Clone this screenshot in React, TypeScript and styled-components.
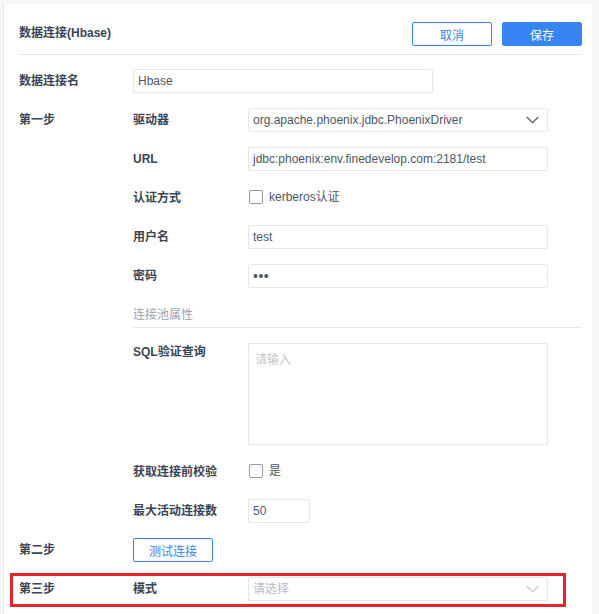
import React from "react";
import styled, { createGlobalStyle, css } from "styled-components";

const GlobalStyle = createGlobalStyle`
  html, body { margin: 0; padding: 0; }
  body {
    background: #f6f7f9;
    font-family: "Liberation Sans", "Noto Sans CJK SC", sans-serif;
    font-size: 12px;
    color: #3d4757;
    overflow: hidden;
  }
  * { box-sizing: border-box; }
`;

const Page = styled.div`
  padding: 4px 7px 0 3px;
  height: 614px;
`;

const Panel = styled.div`
  background: #ffffff;
  border-left: 1px solid #e4e6ea;
  height: 610px;
  padding: 0 10px 0 15px;
`;

const Header = styled.div`
  display: flex;
  align-items: center;
  justify-content: space-between;
  padding: 18px 0 8px;
  border-bottom: 1px solid #e6e8ec;
`;

const Title = styled.div`
  font-weight: bold;
  font-size: 12px;
  color: #3a4456;
  line-height: 20px;
  margin-top: -3px;
`;

const Actions = styled.div`
  display: flex;
  gap: 10px;
`;

const Button = styled.button<{ $primary?: boolean }>`
  width: 80px;
  height: 24px;
  border-radius: 2px;
  font-family: inherit;
  font-size: 12px;
  cursor: pointer;
  border: 1px solid #3685f2;
  padding: 0;
  ${(p) =>
    p.$primary
      ? css`
          background: #3685f2;
          color: #ffffff;
        `
      : css`
          background: #ffffff;
          color: #3685f2;
        `}
`;

const Form = styled.div`
  display: flex;
  flex-direction: column;
  gap: 15px;
  padding-top: 14px;
`;

const Row = styled.div<{ $top?: boolean }>`
  display: grid;
  grid-template-columns: 114px 115px 1fr;
  align-items: ${(p) => (p.$top ? "start" : "center")};
  min-height: 24px;
`;

const StepLabel = styled.div`
  font-weight: bold;
  color: #3a4456;
  line-height: 24px;
`;

const FieldLabel = styled.div<{ $top?: boolean }>`
  font-weight: bold;
  color: #3a4456;
  line-height: ${(p) => (p.$top ? "18px" : "24px")};
`;

const Input = styled.div<{ $w?: number; $placeholder?: boolean }>`
  width: ${(p) => p.$w ?? 300}px;
  height: 24px;
  border: 1px solid #e3e6ea;
  border-radius: 2px;
  padding: 0 4px;
  line-height: 22px;
  color: ${(p) => (p.$placeholder ? "#b8bcc4" : "#4e5768")};
  font-size: 12px;
  display: flex;
  align-items: center;
  justify-content: space-between;
  white-space: nowrap;
`;

const NameInput = styled(Input)`
  grid-column: 2 / span 2;
`;

const Dots = styled.span`
  font-size: 14px;
  letter-spacing: 0.5px;
`;

const Chevron = styled.svg<{ $light?: boolean }>`
  width: 13px;
  height: 8px;
  margin-right: 4px;
  stroke: ${(p) => (p.$light ? "#c6cad1" : "#4e5768")};
  fill: none;
  stroke-width: 1.2;
`;

const TextArea = styled.div`
  width: 300px;
  height: 102px;
  border: 1px solid #e3e6ea;
  border-radius: 2px;
  padding: 7px 6px;
  line-height: 18px;
  color: #c3c7ce;
`;

const CheckLine = styled.label`
  display: flex;
  align-items: center;
  gap: 6px;
  color: #4e5768;
  padding-left: 1px;
  line-height: 20px;
  margin-top: -2px;
`;

const Box = styled.span`
  width: 14px;
  height: 14px;
  border: 1px solid #8f99a8;
  border-radius: 2px;
  background: #fff;
`;

const Section = styled.div`
  margin-left: 114px;
  height: 25px;
  line-height: 24px;
  color: #9ca3ae;
  border-bottom: 1px solid #e6e8ec;
`;

const TestButton = styled(Button)`
  grid-column: 2;
`;

const Highlight = styled.div`
  margin: -4px 16px 0 -9px;
  border: 3px solid #e8252d;
  padding: 1px 0 3px 6px;
`;

const Spacer = styled.div``;

const ChevronIcon = ({ light }: { light?: boolean }) => (
  <Chevron $light={light} viewBox="0 0 13 8">
    <polyline points="0.8,1 6.5,6.6 12.2,1" />
  </Chevron>
);

export default function App() {
  return (
    <>
      <GlobalStyle />
      <Page>
        <Panel>
          <Header>
            <Title>数据连接(Hbase)</Title>
            <Actions>
              <Button>取消</Button>
              <Button $primary>保存</Button>
            </Actions>
          </Header>
          <Form>
            <Row>
              <StepLabel>数据连接名</StepLabel>
              <NameInput>Hbase</NameInput>
            </Row>
            <Row>
              <StepLabel>第一步</StepLabel>
              <FieldLabel>驱动器</FieldLabel>
              <Input>
                <span>org.apache.phoenix.jdbc.PhoenixDriver</span>
                <ChevronIcon />
              </Input>
            </Row>
            <Row>
              <Spacer />
              <FieldLabel>URL</FieldLabel>
              <Input>jdbc:phoenix:env.finedevelop.com:2181/test</Input>
            </Row>
            <Row>
              <Spacer />
              <FieldLabel>认证方式</FieldLabel>
              <CheckLine>
                <Box />
                kerberos认证
              </CheckLine>
            </Row>
            <Row>
              <Spacer />
              <FieldLabel>用户名</FieldLabel>
              <Input>test</Input>
            </Row>
            <Row>
              <Spacer />
              <FieldLabel>密码</FieldLabel>
              <Input>
                <Dots>•••</Dots>
              </Input>
            </Row>
            <Section>连接池属性</Section>
            <Row $top>
              <Spacer />
              <FieldLabel $top>SQL验证查询</FieldLabel>
              <TextArea>请输入</TextArea>
            </Row>
            <Row>
              <Spacer />
              <FieldLabel>获取连接前校验</FieldLabel>
              <CheckLine>
                <Box />
                是
              </CheckLine>
            </Row>
            <Row>
              <Spacer />
              <FieldLabel>最大活动连接数</FieldLabel>
              <Input $w={62}>50</Input>
            </Row>
            <Row>
              <StepLabel>第二步</StepLabel>
              <TestButton>测试连接</TestButton>
            </Row>
            <Highlight>
              <Row>
                <StepLabel>第三步</StepLabel>
                <FieldLabel>模式</FieldLabel>
                <Input $placeholder>
                  <span>请选择</span>
                  <ChevronIcon light />
                </Input>
              </Row>
            </Highlight>
          </Form>
        </Panel>
      </Page>
    </>
  );
}
